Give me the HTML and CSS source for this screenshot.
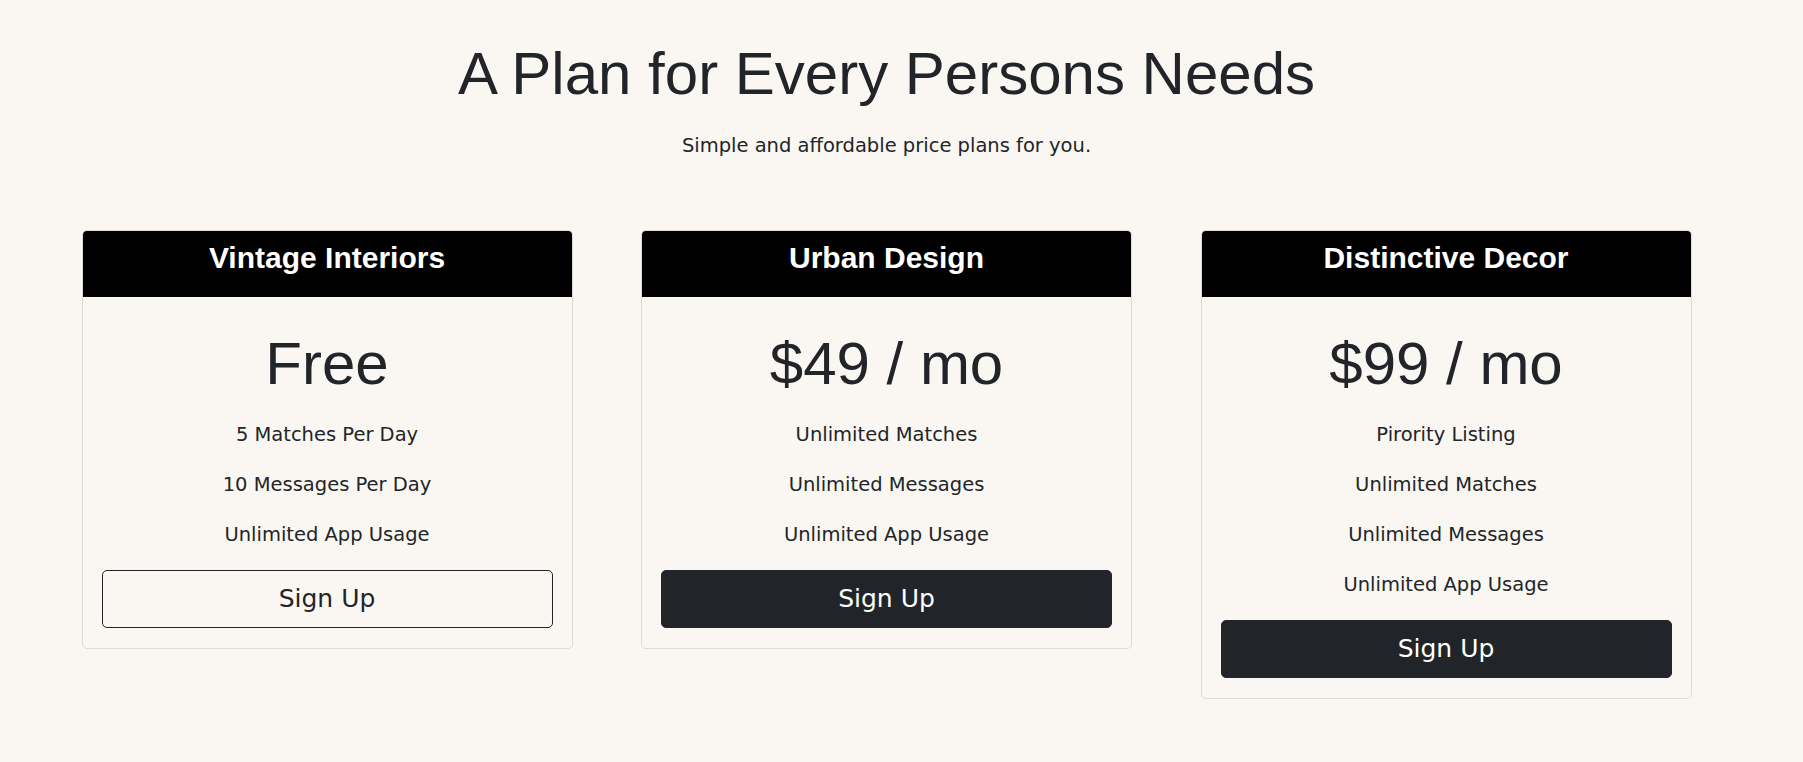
FILE: index.html
```html
<!DOCTYPE html>
<html>
<head>
  <title>Pricing</title>
  <link rel="stylesheet" href="styles.css">
</head>
<body>
  <header class="intro">
    <h1>A Plan for Every Persons Needs</h1>
    <p>Simple and affordable price plans for you.</p>
  </header>

  <main class="plans">
    <div class="card">
      <div class="card-header">
        <h4>Vintage Interiors</h4>
      </div>
      <div class="card-body">
        <h2 class="price">Free</h2>
        <ul class="features">
          <li>5 Matches Per Day</li>
          <li>10 Messages Per Day</li>
          <li>Unlimited App Usage</li>
        </ul>
        <button class="btn btn-outline">Sign Up</button>
      </div>
    </div>

    <div class="card">
      <div class="card-header">
        <h4>Urban Design</h4>
      </div>
      <div class="card-body">
        <h2 class="price">$49 / mo</h2>
        <ul class="features">
          <li>Unlimited Matches</li>
          <li>Unlimited Messages</li>
          <li>Unlimited App Usage</li>
        </ul>
        <button class="btn btn-dark">Sign Up</button>
      </div>
    </div>

    <div class="card">
      <div class="card-header">
        <h4>Distinctive Decor</h4>
      </div>
      <div class="card-body">
        <h2 class="price">$99 / mo</h2>
        <ul class="features">
          <li>Pirority Listing</li>
          <li>Unlimited Matches</li>
          <li>Unlimited Messages</li>
          <li>Unlimited App Usage</li>
        </ul>
        <button class="btn btn-dark">Sign Up</button>
      </div>
    </div>
  </main>
</body>
</html>
```

FILE: styles.css
```css
    body {
      margin: 0;
      padding: 38px 30px 0 0;
      background: #faf7f2;
      color: #212529;
      font-family: "DejaVu Sans", sans-serif;
    }

    .intro {
      text-align: center;
    }

    .intro h1 {
      font-family: "Liberation Sans", Arial, sans-serif;
      font-weight: 400;
      font-size: 60px;
      line-height: 72px;
      margin: 0 0 21px;
    }

    .intro p {
      font-size: 19.5px;
      line-height: 29px;
      margin: 0 0 70px;
    }

    .plans {
      display: grid;
      grid-template-columns: repeat(3, 491px);
      column-gap: 68.5px;
      justify-content: center;
      align-items: start;
    }

    .card {
      border: 1px solid #dedbd6;
      border-radius: 5px;
      text-align: center;
    }

    .card-header {
      background: #000;
      color: #fff;
      padding: 9px 16px 11px;
      border-radius: 4px 4px 0 0;
    }

    .card-header h4 {
      font-family: "Liberation Sans", Arial, sans-serif;
      font-weight: 700;
      font-size: 30px;
      line-height: 36px;
      margin: 0 0 10px;
    }

    .card-body {
      padding: 20px 19px;
    }

    .price {
      font-family: "Liberation Sans", Arial, sans-serif;
      font-weight: 400;
      font-size: 60px;
      line-height: 72px;
      margin: 11px 0 10px;
    }

    .features {
      list-style: none;
      padding: 0;
      margin: 0 0 10px;
      font-size: 19.5px;
      line-height: 50px;
    }

    .btn {
      display: block;
      width: 100%;
      font-family: "DejaVu Sans", sans-serif;
      font-size: 25px;
      line-height: 36px;
      padding: 10px 16px;
      border: 1px solid #212529;
      border-radius: 5px;
      cursor: pointer;
    }

    .btn-outline {
      background: transparent;
      color: #212529;
    }

    .btn-dark {
      background: #212529;
      color: #fff;
    }
```
